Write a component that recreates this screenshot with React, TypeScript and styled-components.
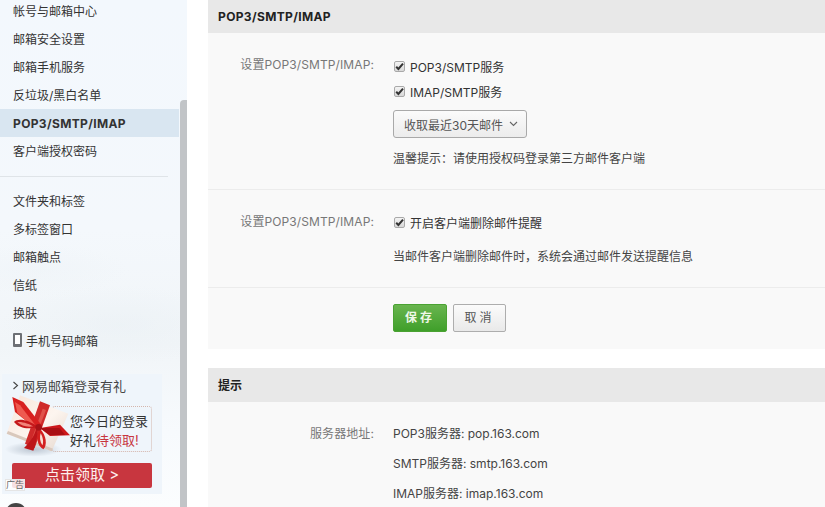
import React from "react";
import styled, { createGlobalStyle } from "styled-components";

const Global = createGlobalStyle`
  html, body { margin: 0; padding: 0; height: 100%; overflow: hidden; background: #fff; }
  body { font-family: Inter, "Noto Sans CJK SC", sans-serif; font-size: 12px; color: #333; }
  #root { height: 100%; }
`;

const Page = styled.div`
  display: flex;
  width: 825px;
  height: 507px;
  overflow: hidden;
`;

const Sidebar = styled.aside`
  position: relative;
  flex: 0 0 187px;
  height: 507px;
  overflow: hidden;
  background:
    radial-gradient(ellipse 120px 40px at 120px 325px, rgba(232, 239, 243, 0.5), transparent),
    radial-gradient(ellipse 90px 26px at 40px 270px, rgba(236, 242, 246, 0.4), transparent),
    linear-gradient(180deg, #f3f8fd 0%, #f4f8fc 45%, #f1f5f8 68%, #f7fafd 85%, #fbfdfe 100%);
`;

const SideContent = styled.div`
  width: 180px;
  margin-top: -3px;
`;

const NavItem = styled.div<{ $active?: boolean }>`
  display: flex;
  align-items: center;
  gap: 4px;
  height: 28px;
  padding: 0 0 ${(p) => (p.$active ? 0 : 2)}px 13px;
  color: #333;
  background: ${(p) => (p.$active ? "#d9e6f1" : "transparent")};
  font-weight: ${(p) => (p.$active ? 700 : 400)};
  letter-spacing: ${(p) => (p.$active ? "0.35px" : "0")};
  width: 179px;
  box-sizing: border-box;
`;

const NavDivider = styled.div`
  width: 168px;
  height: 1px;
  background: #dfe4e8;
  margin: 11px 0 10px;
`;

const ScrollThumb = styled.div`
  position: absolute;
  right: 0;
  top: 100px;
  bottom: 0;
  width: 7px;
  background: #c1c4c7;
  border-radius: 4px 0 0 0;
`;

const PhoneIcon = styled.span`
  display: block;
  width: 5px;
  height: 9px;
  border: 2px solid #6d7075;
  border-bottom-width: 3px;
  border-radius: 1px;
  background: #fff;
`;

const Promo = styled.div`
  position: absolute;
  left: 2px;
  top: 374px;
  width: 160px;
  height: 120px;
  background: #eff5fb;
`;

const PromoTitle = styled.div`
  display: flex;
  align-items: center;
  gap: 3px;
  height: 22px;
  margin-bottom: 10px;
  padding-left: 10px;
  font-size: 13px;
  color: #444;
`;

const PromoCard = styled.div`
  box-sizing: border-box;
  margin: 0 0 0 50px;
  width: 100px;
  height: 46px;
  border: 1px dotted #d4b5ab;
  border-radius: 3px;
  padding: 5px 0 0 17px;
  font-size: 13px;
  line-height: 19px;
  color: #333;
  white-space: nowrap;
`;

const PromoRed = styled.span`
  color: #c8363f;
`;

const PromoButton = styled.div`
  margin: 11px 0 0 10px;
  width: 140px;
  height: 25px;
  border-radius: 2px;
  background: #c8363f;
  color: #fdf0ee;
  font-size: 15px;
  line-height: 23px;
  text-align: center;
`;

const GiftArt = styled.svg`
  position: absolute;
  left: -2px;
  top: 18px;
`;

const AdTag = styled.div`
  position: absolute;
  left: 5px;
  top: 479px;
  width: 20px;
  height: 12px;
  box-sizing: border-box;
  border: 1px solid #e5e5e5;
  background: rgba(255, 255, 255, 0.85);
  color: #666;
  font-size: 9px;
  line-height: 10px;
  text-align: center;
  white-space: nowrap;
`;

const Avatar = styled.div`
  position: absolute;
  left: 5px;
  top: 503px;
  width: 22px;
  height: 22px;
  border-radius: 50%;
  background: #444;
`;

const Main = styled.main`
  flex: 1;
  margin-left: 21px;
`;

const Section = styled.section`
  background: #f9f9f9;
  margin-bottom: 19px;
`;

const SectionHead = styled.div<{ $tall?: boolean }>`
  height: ${(p) => (p.$tall ? 34 : 33)}px;
  line-height: ${(p) => (p.$tall ? 35 : 33)}px;
  background: #e8e8e8;
  padding-left: 10px;
  font-weight: 700;
  letter-spacing: ${(p) => (p.$tall ? "0" : "0.35px")};
  color: #222;
`;

const FormRow = styled.div<{ $h: number; $line?: boolean }>`
  display: grid;
  grid-template-columns: 166px 1fr;
  column-gap: 19px;
  height: ${(p) => p.$h}px;
  box-sizing: border-box;
  border-bottom: ${(p) => (p.$line ? "1px solid #ececec" : "none")};
`;

const Label = styled.div<{ $top: number }>`
  text-align: right;
  padding-top: ${(p) => p.$top}px;
  color: #777;
  line-height: 18px;
  letter-spacing: 0.1px;
`;

const Control = styled.div<{ $top: number }>`
  display: flex;
  flex-direction: column;
  align-items: flex-start;
  padding-top: ${(p) => p.$top}px;
  color: #333;
`;

const CheckLine = styled.div<{ $after: number }>`
  display: flex;
  align-items: center;
  gap: 5px;
  height: 18px;
  margin-bottom: ${(p) => p.$after}px;
`;

const CheckBox = styled.span`
  box-sizing: border-box;
  display: flex;
  align-items: center;
  justify-content: center;
  width: 11px;
  height: 11px;
  margin-left: 1px;
  border: 1px solid #a9a9a9;
  border-radius: 2px;
  background: linear-gradient(180deg, #f4f4f4, #d8d8d8);
`;

const SelectButton = styled.div`
  box-sizing: border-box;
  display: flex;
  align-items: center;
  gap: 6px;
  width: 134px;
  height: 28px;
  padding-left: 10px;
  border: 1px solid #a9a9a9;
  border-radius: 3px;
  background: linear-gradient(180deg, #fbfbfb, #ececec);
  color: #555;
`;

const Hint = styled.div<{ $top: number }>`
  margin-top: ${(p) => p.$top}px;
  line-height: 18px;
  color: #444;
`;

const Info = styled.div`
  height: 18px;
  line-height: 18px;
  margin-bottom: 12px;
  color: #444;
`;

const Buttons = styled.div`
  display: flex;
  gap: 6px;
  padding: 16px 0 17px 185px;
`;

const Btn = styled.div<{ $primary?: boolean }>`
  box-sizing: border-box;
  width: ${(p) => (p.$primary ? 54 : 53)}px;
  height: 28px;
  line-height: 26px;
  text-align: center;
  letter-spacing: 3px;
  border-radius: 2px;
  font-weight: ${(p) => (p.$primary ? 700 : 400)};
  color: ${(p) => (p.$primary ? "#eef8e8" : "#555")};
  border: 1px solid ${(p) => (p.$primary ? "#4aa232" : "#adadad")};
  background: ${(p) =>
    p.$primary
      ? "linear-gradient(180deg, #69b54f, #3f9f2a)"
      : "linear-gradient(180deg, #fbfbfb, #e9e9e9)"};
`;

const Check = () => (
  <svg width="9" height="9" viewBox="0 0 9 9">
    <path d="M1.2 4.8 L3.4 7 L8 1.6" fill="none" stroke="#333" strokeWidth="2" />
  </svg>
);

const Gift = () => (
  <GiftArt width="75" height="70" viewBox="0 0 225 210">
    <defs>
      <linearGradient id="box" x1="0" y1="0" x2="1" y2="1">
        <stop offset="0" stopColor="#f8e6da" />
        <stop offset="0.55" stopColor="#fdf5ef" />
        <stop offset="1" stopColor="#e4d6cc" />
      </linearGradient>
      <radialGradient id="shade" cx="0.5" cy="0.5" r="0.5">
        <stop offset="0" stopColor="#8f9cad" stopOpacity="0.55" />
        <stop offset="1" stopColor="#8f9cad" stopOpacity="0" />
      </radialGradient>
    </defs>
    <ellipse cx="100" cy="172" rx="85" ry="22" fill="url(#shade)" />
    <polygon points="60,10 205,65 155,178 20,125" fill="url(#box)" />
    <polygon points="20,125 155,178 159,170 24,117" fill="#d9c8bc" />
    <polygon points="120,28 150,40 104,168 75,155" fill="#cf2a2a" />
    <polygon points="128,50 138,54 98,160 90,156" fill="#e0524a" />
    <polygon points="37,15 70,30 125,100 110,112 45,60" fill="#d8201f" />
    <polygon points="45,30 60,40 105,98 90,98 52,62" fill="#ee5a50" />
    <polygon points="180,98 210,130 150,132 120,108" fill="#cd171b" />
    <polygon points="120,108 178,108 195,128 150,130" fill="#a90f14" />
    <path d="M112 104 C90 112 60 112 42 90 C52 76 90 84 112 104Z" fill="#c5181b" />
    <path d="M52 90 C68 88 88 96 100 103 C80 106 64 102 52 90Z" fill="#f1847a" />
    <path d="M120 110 C140 130 142 160 130 172 C112 162 104 130 120 110Z" fill="#d3201f" />
    <path d="M122 124 C130 138 131 152 127 160 C120 150 118 136 122 124Z" fill="#f8ddd2" />
    <path d="M108 112 C104 130 90 152 72 168 L100 176 C108 160 112 130 114 112Z" fill="#bd1519" />
    <circle cx="116" cy="106" r="10" fill="#a81216" />
  </GiftArt>
);

const NAV_A = ["帐号与邮箱中心", "邮箱安全设置", "邮箱手机服务", "反垃圾/黑白名单"];
const NAV_B = ["文件夹和标签", "多标签窗口", "邮箱触点", "信纸", "换肤"];

export default function App() {
  return (
    <Page>
      <Global />
      <Sidebar>
        <SideContent>
          {NAV_A.map((t) => (
            <NavItem key={t}>{t}</NavItem>
          ))}
          <NavItem $active>POP3/SMTP/IMAP</NavItem>
          <NavItem>客户端授权密码</NavItem>
          <NavDivider />
          {NAV_B.map((t) => (
            <NavItem key={t}>{t}</NavItem>
          ))}
          <NavItem>
            <PhoneIcon />
            手机号码邮箱
          </NavItem>
        </SideContent>
        <ScrollThumb />
        <Promo>
          <PromoTitle>
            <svg width="7" height="9" viewBox="0 0 7 9">
              <path d="M1.5 1 L5.5 4.5 L1.5 8" fill="none" stroke="#444" strokeWidth="1.1" />
            </svg>
            网易邮箱登录有礼
          </PromoTitle>
          <PromoCard>
            您今日的登录
            <br />
            好礼<PromoRed>待领取!</PromoRed>
          </PromoCard>
          <PromoButton>点击领取 &gt;</PromoButton>
          <Gift />
        </Promo>
        <AdTag>广告</AdTag>
        <Avatar />
      </Sidebar>
      <Main>
        <Section>
          <SectionHead>POP3/SMTP/IMAP</SectionHead>
          <FormRow $h={157} $line>
            <Label $top={23}>设置POP3/SMTP/IMAP:</Label>
            <Control $top={24}>
              <CheckLine $after={7}>
                <CheckBox><Check /></CheckBox>
                POP3/SMTP服务
              </CheckLine>
              <CheckLine $after={10}>
                <CheckBox><Check /></CheckBox>
                IMAP/SMTP服务
              </CheckLine>
              <SelectButton>
                收取最近30天邮件
                <svg width="9" height="6" viewBox="0 0 9 6">
                  <path d="M1 1 L4.5 4.5 L8 1" fill="none" stroke="#666" strokeWidth="1.1" />
                </svg>
              </SelectButton>
              <Hint $top={12}>温馨提示：请使用授权码登录第三方邮件客户端</Hint>
            </Control>
          </FormRow>
          <FormRow $h={98} $line>
            <Label $top={23}>设置POP3/SMTP/IMAP:</Label>
            <Control $top={23}>
              <CheckLine $after={0}>
                <CheckBox><Check /></CheckBox>
                开启客户端删除邮件提醒
              </CheckLine>
              <Hint $top={17}>当邮件客户端删除邮件时，系统会通过邮件发送提醒信息</Hint>
            </Control>
          </FormRow>
          <Buttons>
            <Btn $primary>保存</Btn>
            <Btn>取消</Btn>
          </Buttons>
        </Section>
        <Section>
          <SectionHead $tall>提示</SectionHead>
          <FormRow $h={120}>
            <Label $top={23}>服务器地址:</Label>
            <Control $top={23}>
              <Info>POP3服务器: pop.163.com</Info>
              <Info>SMTP服务器: smtp.163.com</Info>
              <Info>IMAP服务器: imap.163.com</Info>
            </Control>
          </FormRow>
        </Section>
      </Main>
    </Page>
  );
}
